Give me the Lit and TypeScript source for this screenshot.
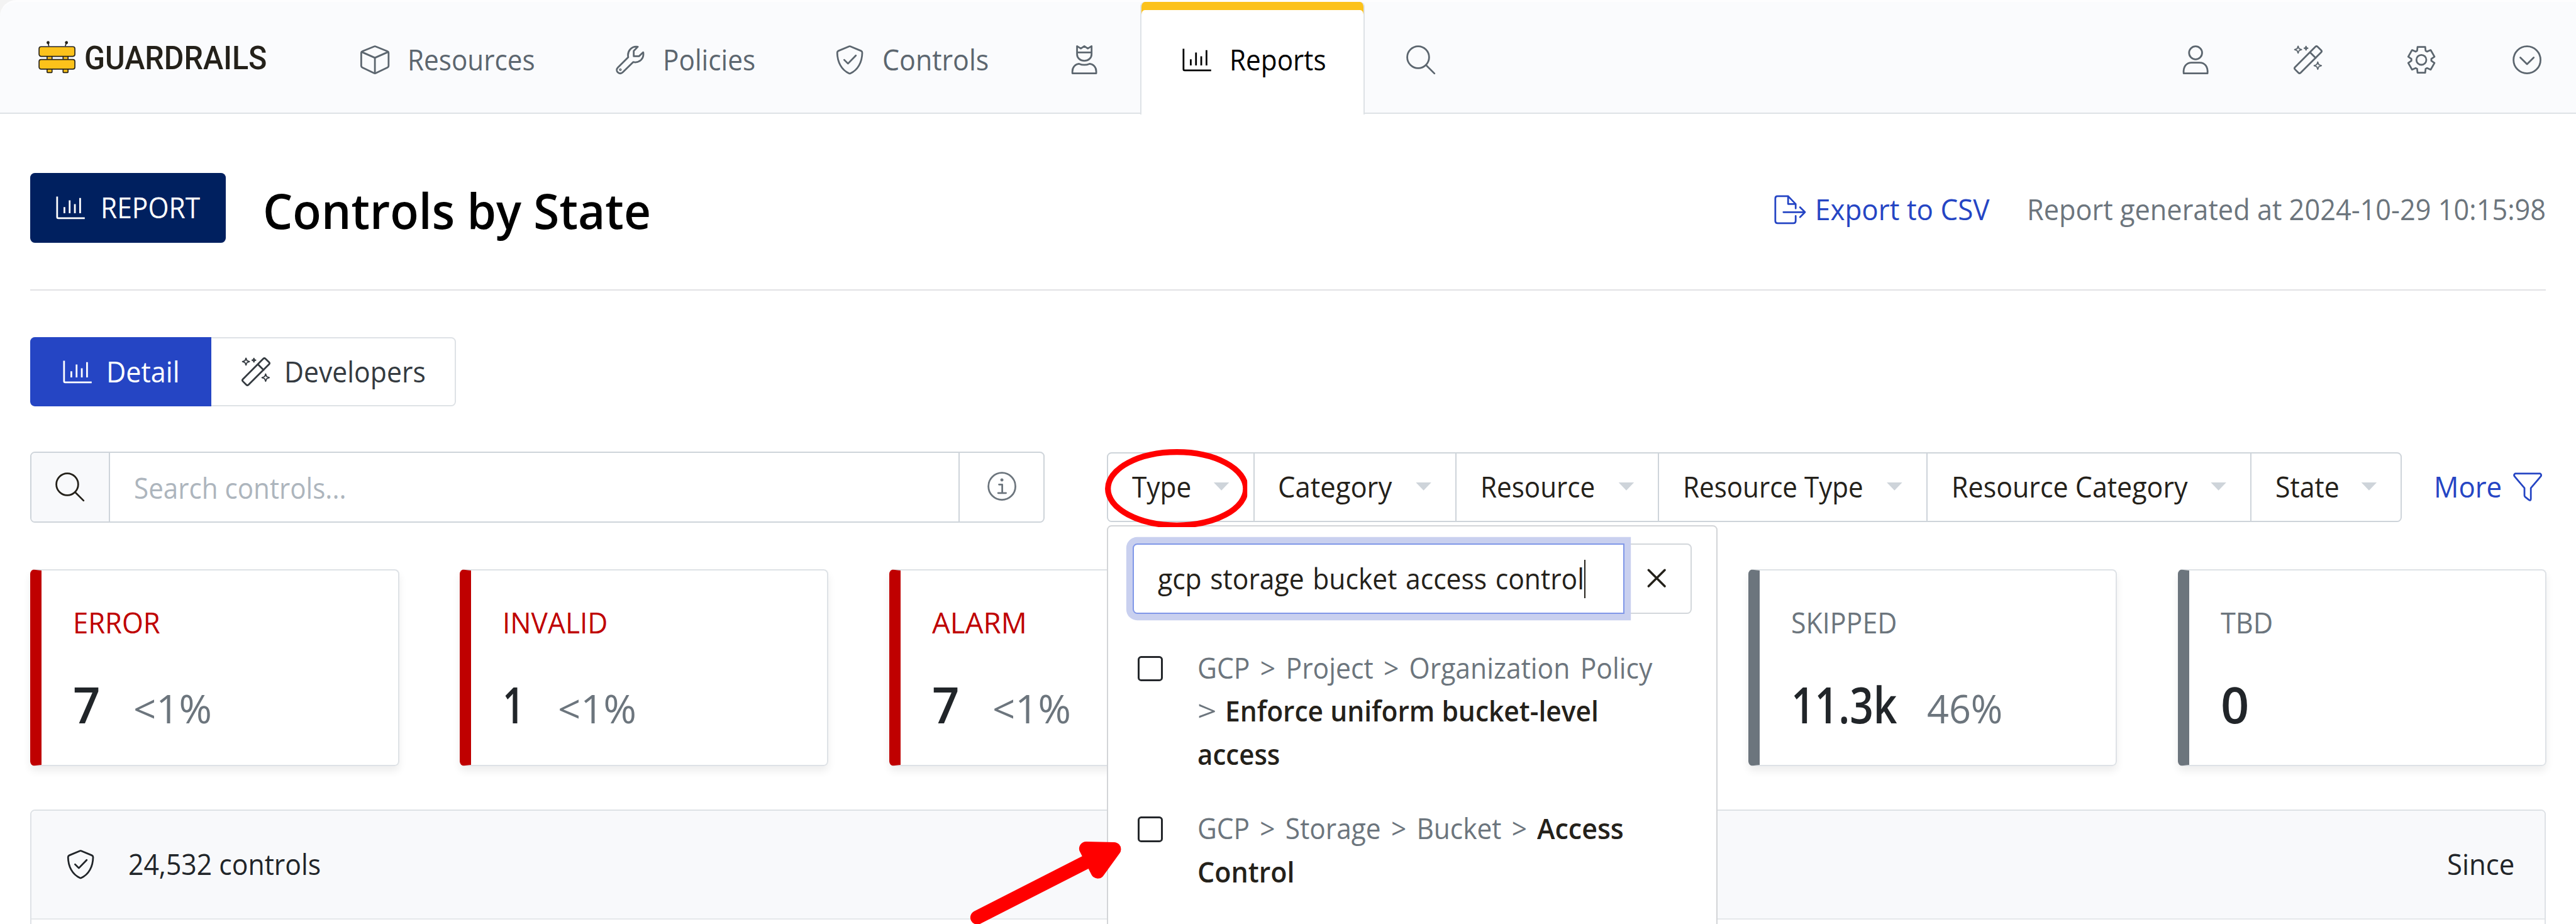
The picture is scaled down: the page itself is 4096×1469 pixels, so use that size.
import { LitElement, html, css, svg, nothing } from "lit";
import { customElement, property, state, query } from "lit/decorators.js";
import { styleMap } from "lit/directives/style-map.js";
import { classMap } from "lit/directives/class-map.js";

/** A single line of text condensed or widened so that it takes exactly `w` pixels. */
@customElement("fit-text")
class FitText extends LitElement {
  @property({ type: Number }) w = 100;
  @state() private scale = 1;
  @query(".run") private run!: HTMLElement;

  static styles = css`
    :host { display: inline-block; white-space: nowrap; flex: none; }
    .box { display: inline-block; }
    .run { display: inline-block; transform-origin: 0 50%; }
  `;

  firstUpdated() {
    const box = this.renderRoot.querySelector(".box") as HTMLElement;
    const natural = this.run.getBoundingClientRect().width;
    const target = box.getBoundingClientRect().width;
    if (natural > 0) this.scale = target / natural;
  }

  render() {
    return html`<span class="box" style=${styleMap({ width: `${this.w}px` })}
      ><span class="run" style=${styleMap({ transform: `scaleX(${this.scale})` })}><slot></slot></span></span>`;
  }
}

const star = (x: number, y: number, r: number) => {
  const k = r * 0.28;
  return `M${x} ${y - r}L${x + k} ${y - k}L${x + r} ${y}L${x + k} ${y + k}L${x} ${y + r}L${x - k} ${y + k}L${x - r} ${y}L${x - k} ${y - k}Z`;
};

const gearPath = (() => {
  const pts: string[] = [];
  for (let i = 0; i < 6; i++) {
    const a = -90 + i * 60;
    for (const [d, r] of [[-25, 17.2], [-16.5, 23.2], [16.5, 23.2], [25, 17.2]]) {
      const t = ((a + d) * Math.PI) / 180;
      pts.push(`${(25 + r * Math.cos(t)).toFixed(2)} ${(25 + r * Math.sin(t)).toFixed(2)}`);
    }
  }
  return `M${pts.join("L")}Z`;
})();

const icons = {
  cube: svg`<path d="M23.5 2.2Q25 1.5 26.5 2.2L46.5 10.2Q48.5 11 48.5 13V35.5Q48.5 37.2 46.8 38L26.5 47.9Q25 48.6 23.5 47.9L3.2 38Q1.5 37.2 1.5 35.5V13Q1.5 11 3.5 10.2Z"/><path d="M2.3 11.5L25 21.5L47.7 11.5M25 21.5V48"/>`,
  wrench: svg`<path d="M3.6 38.3L21.5 20.5C19.5 10 27 1 38 2.6L31 9.8V18.8H40L47.3 12C49.2 23 40.5 31 30 28.8L12 46.5C9.500 49 6 49 3.600 46.500C1.200 44 1.200 40.700 3.600 38.300Z"/><circle cx="8" cy="42" r=".8"/>`,
  shield: svg`<path d="M24 1.900Q25 1.500 26 1.900L44.500 9.600Q46.500 10.500 46.500 12.700C46.300 29 39 42.500 26 48.300Q25 48.700 24 48.300C11 42.500 3.700 29 3.500 12.700Q3.500 10.500 5.500 9.600Z"/><path d="M15.500 25L22 31.500L35.500 17.500"/>`,
  crown: svg`<path d="M12.500 1.500V15C12.500 22 18 26.500 25 26.500S37.500 22 37.500 15V1.500L31 5.500L25 1.500L19 5.500ZM12.500 12.300H37.500"/><path d="M4.500 48.200V45C4.500 37.500 9.500 32.300 16 31.800C22 34.300 28 34.300 34 31.800C40.500 32.300 45.500 37.500 45.500 45V48.200Z"/>`,
  user: svg`<circle cx="25" cy="13" r="11.200"/><path d="M4.500 48.200C3.500 37 9 29.800 18 29.800H32C41 29.800 46.500 37 45.500 48.200Z"/>`,
  chart: svg`<path d="M2 6V41Q2 43 4 43H49.500M14.500 24V34.500M23.500 12.500V34.500M32.500 19V34.500M41.500 8.500V34.500"/>`,
  search: svg`<circle cx="20.500" cy="20.500" r="18.800"/><path d="M34 34L48.500 48.500"/>`,
  wand: svg`<path d="M37.500 2.500Q39.300.800 41.100 2.500L47.500 8.700Q49 10.300 47.500 12L12 47.300Q10 49 8.300 47.300L2.200 41.200Q.800 39.500 2.200 37.800ZM28 12L38 22"/><path stroke-width="2" d=${star(7.7, 7.5, 6)}/><path stroke-width="2" d=${star(21.3, 5, 3.2)}/><path stroke-width="2" d=${star(41.5, 35, 6.3)}/>`,
  gear: svg`<path d=${gearPath}/><circle cx="25" cy="25" r="8.500"/>`,
  down: svg`<circle cx="25" cy="25" r="23.200"/><path d="M13.500 21L25 32.500L36.500 21"/>`,
  file: svg`<path d="M37 23V15.500L24 2H6Q2 2 2 6V44.500Q2 48.500 6 48.500H33Q37 48.500 37 44.500V36M24 2V15.500H37M16 29.500H53M44.500 21L53 29.500L44.500 38"/>`,
  filter: svg`<path d="M3.500 2H46.500Q49.500 4 47.500 7L30.500 27V45Q30.500 49.500 27 47.200L20.500 42Q19.500 41 19.500 39.500V27L2.500 7Q.500 4 3.500 2Z"/>`,
  info: svg`<circle cx="25" cy="25" r="23.200"/><path d="M20 22H25.500V36M18.500 36.500H32"/><circle cx="25" cy="14" r="1.200"/>`,
  close: svg`<path stroke-width="4" d="M10.500 10.500L39.500 39.500M39.500 10.500L10.500 39.500"/>`,
};
type IconName = keyof typeof icons;

const icon = (name: IconName, cls = "") =>
  html`<svg class="icon ${cls}" viewBox=${name === "file" ? "0 0 56 50" : "0 0 50 50"}>${icons[name]}</svg>`;

const logo = html`<svg class="logo-mark" viewBox="0 0 64 56">
  <g fill="#fcc21b" stroke="#24211a" stroke-width="1.800">
    <path d="M18 9L16.700 3M46.300 9L48.300 3" fill="none" />
    <circle cx="16.700" cy="3" r="1.700" fill="#24211a" /><circle cx="48.300" cy="3" r="1.700" fill="#24211a" />
    <rect x="15" y="24" width="8.500" height="30.500" rx="1" /><rect x="42.500" y="24" width="8.500" height="30.500" rx="1" />
    <rect x="1.200" y="10" width="61.600" height="16.600" rx="3.500" /><rect x="1.200" y="32" width="61.600" height="16.600" rx="3.500" />
  </g>
</svg>`;

interface Card { label?: string; w?: number; value?: string; vw?: number; pct?: string; pw?: number; gray?: boolean }
const cards: Card[] = [
  { label: "ERROR", w: 150, value: "7", vw: 47, pct: "<1%", pw: 135 },
  { label: "INVALID", w: 181, value: "1", vw: 38, pct: "<1%", pw: 135 },
  { label: "ALARM", w: 163, value: "7", vw: 47, pct: "<1%", pw: 135 },
  { gray: true },
  { label: "SKIPPED", w: 182, value: "11.3k", vw: 182, pct: "46%", pw: 130, gray: true },
  { label: "TBD", w: 90, value: "0", vw: 49, gray: true },
];

const filters = [
  { label: "Type", w: 102, cell: "c1" },
  { label: "Category", w: 196, cell: "c2" },
  { label: "Resource", w: 197, cell: "c3" },
  { label: "Resource Type", w: 310, cell: "c4" },
  { label: "Resource Category", w: 406, cell: "c5" },
  { label: "State", w: 110, cell: "c6" },
];

const nav: { icon: IconName; label?: string; w?: number; active?: boolean }[] = [
  { icon: "cube", label: "Resources", w: 219 },
  { icon: "wrench", label: "Policies", w: 159 },
  { icon: "shield", label: "Controls", w: 183 },
  { icon: "crown" },
  { icon: "chart", label: "Reports", w: 166, active: true },
  { icon: "search" },
];

@customElement("app-root")
class AppRoot extends LitElement {
  static styles = css`
    :host { display: block; zoom: 0.925; width: 4428.2px; height: 1588.2px; overflow: hidden; position: relative;
      background: #fff; color: #212529; font: 400 49px/74px "Open Sans", "Noto Sans", sans-serif; --b: 2.2px; }
    * { box-sizing: border-box; }
    .icon { width: 50px; height: 50px; flex: none; fill: none; stroke: currentColor; stroke-width: 3; stroke-linejoin: round; stroke-linecap: round; overflow: visible; display: block; }
    .chart { stroke-linecap: butt; }
    .row { display: flex; align-items: center; }

    .top { background: #f3f3f3; }
    .nav { height: 196px; border-top: 4px solid #fdfdfe; border-bottom: var(--b) solid #dee2e6; background: #fafbfd; border-top-left-radius: 28px; align-items: stretch; color: #5c666f; }
    .brand { gap: 15px; width: 551px; padding: 4px 0 0 66px; }
    .logo-mark { width: 64px; height: 56px; margin-top: -4px; display: block; }
    .brand-name { font: 500 56px/74px Roboto, "Liberation Sans", sans-serif; color: #24211a; }
    .item { padding: 9px 69px 0; gap: 31px; }
    .item.crown { padding: 9px 71px 0 70px; }
    .item.active { background: #fff; color: #000; border: solid #dee2e6; border-width: 0 var(--b); padding: 6px 65px 0 70px; margin: 0 2px -3px 0; position: relative; border-radius: 8px 8px 0 0; box-shadow: inset 0 14px #fcc21b; }
    .tools { margin-left: auto; padding: 9px 59px 0 0; }
    .tools .icon { margin-left: 144px; }
    .tools .last { margin-left: 132px; }

    .main { padding: 0 52px; }
    .head { height: 304px; padding-top: 27px; border-bottom: var(--b) solid #e1e2e4; }
    .badge { width: 336px; height: 120px; background: #00205f; color: #fff; border-radius: 8px; padding-left: 44px; gap: 27px; margin-bottom: 6px; }
    .title { font-size: 85px; line-height: 110px; font-weight: 600; color: #000; margin-left: 64px; }
    .blue { color: #2545c4; }
    .export { gap: 15px; margin-left: auto; }
    .export .icon { width: 56px; }
    .muted { color: #6c757d; }
    .when { margin-left: 64px; }

    .tabs { margin-top: 80px; height: 118px; width: 732px; border: var(--b) solid #dee2e6; border-radius: 8px; align-items: stretch; }
    .tab { padding-left: 52px; gap: 24px; color: #343a40; }
    .tab.on { background: #2545c4; color: #fff; width: 311px; margin: -2.200px 0 -2.200px -2.200px; padding-left: 56px; gap: 25px; border-radius: 8px 0 0 8px; }

    .bar { margin-top: 78px; height: 122px; }
    .search { width: 1744px; height: 122px; border: var(--b) solid #ced4da; border-radius: 8px; align-items: stretch; overflow: hidden; }
    .lens { width: 135px; background: #f8f9fb; border-right: var(--b) solid #ced4da; justify-content: center; color: #24211a; }
    .ph { flex: 1; padding: 4px 0 0 41px; color: #adb5bd; }
    .hint { width: 146px; border-left: var(--b) solid #ced4da; justify-content: center; color: #6c757d; padding-bottom: 2px; }
    .filters { position: relative; margin-left: 107px; height: 120px; border: var(--b) solid #ced4da; border-radius: 8px; align-items: stretch; width: 2226px; color: #24211a; }
    .cell { justify-content: space-between; padding: 0 41px 0 41px; border-left: var(--b) solid #ced4da; }
    .c1 { width: 249px; border-left: 0; }
    .c2 { width: 347.500px; }
    .c3 { width: 348.500px; }
    .c4 { width: 461px; }
    .c5 { width: 557px; }
    .c6 { flex: 1; }
    .caret { width: 27px; height: 14px; background: #ced4da; clip-path: polygon(0 0, 100% 0, 50% 100%); margin-top: -2px; }
    .more { gap: 19px; margin-left: 55px; }

    .menu { position: absolute; z-index: 2; left: -2px; top: 124px; width: 1049px; height: 760px; background: #fff; border: var(--b) solid #d3d5d8; border-radius: 8px; padding: 29px 42px; }
    .field { align-items: stretch; height: 121px; }
    .input { width: 845px; border: var(--b) solid #8097e8; border-radius: 8px 0 0 8px; box-shadow: 0 0 0 11px #c9d0ef; padding-left: 41px; position: relative; z-index: 1; background: #fff; word-spacing: 3px; }
    .cursor { width: 2.200px; height: 66px; background: #24211a; }
    .clear { width: 116px; border: var(--b) solid #d3d7db; border-left: 0; border-radius: 0 8px 8px 0; padding: 0 0 2px 32px; }
    .clear .icon { width: 48px; height: 48px; }
    .option { display: flex; align-items: flex-start; margin-top: 54px; gap: 59px; padding-left: 8px; color: #6c757d; }
    .first-option { margin-top: 56px; }
    .path { word-spacing: 6px; }
    .check { width: 44px; height: 44px; border: 4px solid #24272b; border-radius: 6px; margin-top: 16px; flex: none; }
    .line { display: flex; }
    b { font-weight: 600; color: #24211a; display: flex; }

    .cards { display: grid; grid-template-columns: repeat(6, 634px); column-gap: 104.300px; margin-top: 80px; }
    .card { height: 339px; border: var(--b) solid #dee2e6; border-left: 20px solid #bf0000; border-radius: 8px; box-shadow: 0 8px 14px rgba(0, 0, 0, 0.07); padding: 53px 0 0 54px; color: #bf0000; }
    .card.gray { border-left-color: #6c757d; color: #6c757d; }
    .figures { display: flex; align-items: baseline; gap: 57px; line-height: 100px; margin-top: 53px; color: #6c757d; font-size: 68px; }
    .gray .figures { gap: 52px; }
    .value { font-size: 86px; font-weight: 600; color: #212529; }

    .table { margin-top: 74px; border: var(--b) solid #dee2e6; border-radius: 8px 8px 0 0; height: 260px; }
    .thead { height: 187px; border-bottom: var(--b) solid #e5e8eb; background: #f8f9fb; padding: 0 52px 0 59px; border-radius: 8px 8px 0 0; }
    .count { margin-left: 57px; }
    .since { margin-left: auto; }

    .marks { position: absolute; left: 0; top: 0; z-index: 5; width: 4428px; height: 1588px; pointer-events: none; fill: none; stroke: #f00; }
  `;

  private renderNav() {
    return html`<div class="top"><div class="nav row">
      <div class="brand row">${logo}<fit-text class="brand-name" w="314">GUARDRAILS</fit-text></div>
      ${nav.map((n) => html`<div class=${classMap({ item: true, row: true, crown: n.icon === "crown", active: !!n.active })}>
        ${icon(n.icon, n.icon === "chart" ? "chart" : "")}${n.label ? html`<fit-text w=${n.w!}>${n.label}</fit-text>` : nothing}
      </div>`)}
      <div class="tools row">${icon("user")}${icon("wand")}${icon("gear")}${icon("down", "last")}</div>
    </div></div>`;
  }

  private renderMenu() {
    return html`<div class="menu">
      <div class="field row">
        <div class="input row"><fit-text w="733">gcp storage bucket access control</fit-text><span class="cursor"></span></div>
        <div class="clear row">${icon("close")}</div>
      </div>
      <div class="option first-option"><span class="check"></span><div>
        <div class="line"><fit-text class="path" w="782">GCP &gt; Project &gt; Organization Policy</fit-text></div>
        <div class="line"><fit-text w="48">&gt;&nbsp;</fit-text><b><fit-text w="642">Enforce uniform bucket-level</fit-text></b></div>
        <div class="line"><b><fit-text w="142">access</fit-text></b></div>
      </div></div>
      <div class="option"><span class="check"></span><div>
        <div class="line"><fit-text class="path" w="584">GCP &gt; Storage &gt; Bucket &gt;&nbsp;</fit-text><b><fit-text w="149">Access</fit-text></b></div>
        <div class="line"><b><fit-text w="167">Control</fit-text></b></div>
      </div></div>
    </div>`;
  }

  private renderCard(c: Card) {
    return html`<div class=${classMap({ card: true, gray: !!c.gray })}>
      ${c.label ? html`<fit-text w=${c.w!}>${c.label}</fit-text>
      <div class="figures"><fit-text class="value" w=${c.vw!}>${c.value}</fit-text>${c.pct ? html`<fit-text w=${c.pw!}>${c.pct}</fit-text>` : nothing}</div>` : nothing}
    </div>`;
  }

  render() {
    return html`
      ${this.renderNav()}
      <div class="main">
        <div class="head row">
          <div class="badge row">${icon("chart", "chart")}<fit-text w="171">REPORT</fit-text></div>
          <fit-text class="title" w="667">Controls by State</fit-text>
          <div class="export row blue">${icon("file")}<fit-text w="300">Export to CSV</fit-text></div>
          <fit-text class="muted when" w="892">Report generated at 2024-10-29 10:15:98</fit-text>
        </div>
        <div class="tabs row">
          <div class="tab on row">${icon("chart", "chart")}<fit-text w="126">Detail</fit-text></div>
          <div class="tab row">${icon("wand")}<fit-text w="243">Developers</fit-text></div>
        </div>
        <div class="bar row">
          <div class="search row">
            <div class="lens row">${icon("search")}</div>
            <div class="ph row"><fit-text w="365">Search controls...</fit-text></div>
            <div class="hint row">${icon("info")}</div>
          </div>
          <div class="filters row">
            ${filters.map((f) => html`<div class="cell row ${f.cell}"><fit-text w=${f.w}>${f.label}</fit-text><span class="caret"></span></div>`)}
            ${this.renderMenu()}
          </div>
          <div class="more row blue"><fit-text w="117">More</fit-text>${icon("filter")}</div>
        </div>
        <div class="cards">${cards.map((c) => this.renderCard(c))}</div>
        <div class="table">
          <div class="thead row">${icon("shield")}<fit-text class="count" w="331">24,532 controls</fit-text><fit-text class="since" w="116">Since</fit-text></div>
        </div>
      </div>
      <svg class="marks" viewBox="0 0 4428 1588">
        <clipPath id="ring"><rect x="1890" y="760" width="254" height="146" /></clipPath>
        <ellipse cx="2023" cy="840" rx="118.500" ry="63" stroke-width="10" clip-path="url(#ring)" />
        <path d="M1680 1577L1880 1475" stroke-width="24" stroke-linecap="round" />
        <path d="M1867 1458.500L1915 1459.500L1887 1498Z" fill="#f00" stroke-width="24" stroke-linejoin="round" />
      </svg>
    `;
  }
}
